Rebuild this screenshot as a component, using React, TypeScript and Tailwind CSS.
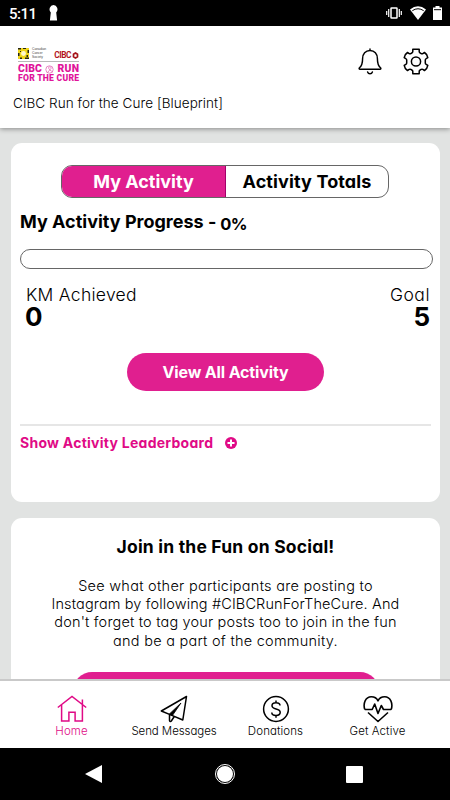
import React from "react";

function StatusBar() {
  return (
    <div className="flex h-[26px] shrink-0 items-center bg-black pl-[9px] pr-2 text-white">
      <span className="w-[25px] whitespace-nowrap pt-[2px] font-['Roboto'] text-[15px] font-medium leading-[24px] tracking-[-0.5px]">5:11</span>
      <svg className="ml-[15px]" width="9" height="16" viewBox="0 0 10 16" preserveAspectRatio="none" fill="currentColor">
        <path d="M5 0a4.4 4.4 0 0 0-3 7.6L1 15.5h8L8 7.6A4.4 4.4 0 0 0 5 0z" />
      </svg>
      <svg className="ml-auto" width="16" height="12" viewBox="0 0 16 12" fill="none" stroke="currentColor">
        <rect x="5" y="1" width="6" height="10" rx=".5" strokeWidth="1.5" />
        <path d="M2.7 2v8M13.3 2v8M.7 4v4M15.3 4v4" strokeWidth="1.2" />
      </svg>
      <svg className="ml-2" width="16" height="14" viewBox="0 0 16 14" fill="none">
        <path d="M0 3.5Q8-3 16 3.5L8 14z" fill="currentColor" />
        <path d="M2.3 4.7Q8 .8 13.7 4.7" stroke="#000" strokeWidth="1" />
      </svg>
      <svg className="ml-[7px]" width="9" height="14" viewBox="0 0 9 14" fill="currentColor">
        <path d="M2.5 0h4v1.5H9V14H0V1.5h2.5z" />
        <path d="M1 3.7h7" stroke="#000" />
      </svg>
    </div>
  );
}

function Logo() {
  return (
    <div className="flex w-[61px] flex-col font-['Roboto']">
      <div className="flex h-[12px] items-start">
        <svg width="11" height="11" viewBox="0 0 11 11">
          <path fill="#efd51b" d="M0 0h11v11H0z" />
          <path d="M0 0h3v1.5H0zM5 0h3v1H5zM9.5 2H11v3H9.5zM0 5h1.5v3H0zM2 9.5h2V11H2zM7 9.5h4V11H7zM8.5 7H10v2H8.5zM2 3h1v1H2z" fill="#252414" />
          <circle cx="5.5" cy="5.5" r="2.4" fill="#fff9cf" />
        </svg>
        <div className="ml-[3px] flex flex-col font-['Liberation_Sans'] text-[3.3px] leading-[3.8px] text-[#444]">
          <span>Canadian</span>
          <span>Cancer</span>
          <span>Society</span>
        </div>
        <span className="ml-auto mt-[2px] text-[8.3px] font-bold leading-[10px] tracking-[-0.45px] text-[#b3131b]">CIBC</span>
        <svg className="ml-[1px] mt-[3.5px]" width="7" height="7" viewBox="0 0 6 7" fill="none" stroke="#a51219" strokeWidth="1.7">
          <path d="M3 1l2 1.2v2.6L3 6 1 4.8V2.2z" />
        </svg>
      </div>
      <div className="mt-px h-px bg-[#b8b8b8]" />
      <div className="mt-[2px] flex h-[10px] items-center justify-between text-[10.4px] font-black leading-[10px] text-[#e0149a]">
        <span className="tracking-[0.1px]">CIBC</span>
        <svg width="9" height="9" viewBox="0 0 9 9" fill="none" stroke="#e77bbd" strokeWidth=".9">
          <circle cx="4.5" cy="4.5" r="3.7" />
          <path d="M2 8l4-4.5C7 2 4 1 3.6 2.5S6 6 8 7" />
        </svg>
        <span className="-mr-[0.3px] tracking-[0.3px]">RUN</span>
      </div>
      <div className="whitespace-nowrap text-[8.6px] font-black leading-[9px] tracking-[0.25px] text-[#e0149a]">FOR THE CURE</div>
    </div>
  );
}

function Header() {
  return (
    <header className="z-10 flex h-[102px] shrink-0 flex-col bg-white shadow-[0_1px_5px_rgba(0,0,0,0.4)]">
      <div className="flex h-[67px] items-start pl-[18px] pr-[21px] pt-[22px]">
        <Logo />
        <svg className="ml-auto" width="24" height="28" viewBox="0 0 24 28" fill="none" stroke="#000" strokeWidth="1.45" strokeLinecap="round" strokeLinejoin="round">
          <path d="M12 1v1.4M12 2.4c-4.5 0-7.4 3.4-7.4 8 0 6-1 7.6-3.1 9.3-.7.7-.4 1.5.5 1.5h20c.9 0 1.2-.8.5-1.5-2.1-1.7-3.1-3.3-3.1-9.3 0-4.6-2.9-8-7.4-8zM9.6 24c.7 2.4 4.1 2.4 4.8 0" />
        </svg>
        <svg className="ml-[21px]" width="26" height="27" viewBox="0 0 26 27" fill="none" stroke="#000" strokeWidth="1.5" strokeLinejoin="round">
          <path d="M9.8 1.2h6.4v2.4c0 .7.4 1.1 1 1.4l1 .6c.6.3 1 .3 1.6 0l1.7-1.1c2 1.300 3 3 3.300 5.100l-1.600 1c-.7.4-.9.8-.9 1.400v3c0 .6.200 1 .9 1.400l1.600 1c-.3 2.100-1.300 3.800-3.300 5.100l-1.700-1.100c-.6-.3-1-.3-1.600 0l-1 .6c-.6.3-1 .7-1 1.400v2.400H9.800v-2.400c0-.7-.4-1.100-1-1.400l-1-.6c-.6-.3-1-.3-1.600 0l-1.700 1.100c-2-1.300-3-3-3.300-5.100l1.600-1c.7-.4.9-.8.9-1.400v-3c0-.6-.2-1-.9-1.400l-1.600-1c.3-2.100 1.300-3.800 3.300-5.100l1.700 1.100c.6.3 1 .3 1.600 0l1-.6c.6-.3 1-.7 1-1.400z" />
          <circle cx="13" cy="13.5" r="4.6" />
        </svg>
      </div>
      <div className="pl-[13px] text-[13.5px] font-light leading-[20px] tracking-[0.06px]">CIBC Run for the Cure [Blueprint]</div>
    </header>
  );
}

function ActivityCard() {
  return (
    <section className="flex h-[359px] w-[429px] shrink-0 flex-col rounded-[11px] bg-white pl-[9px] pt-[22px]">
      <div className="ml-[41px] flex h-[33px] w-[328px] overflow-hidden rounded-[11px] border border-[#666] text-[18px] font-bold leading-[31px]">
        <div className="w-[164px] border-r border-[#a3006b] bg-[#e01f8f] text-center text-white">My Activity</div>
        <div className="flex-1 text-center tracking-[0.12px]">Activity Totals</div>
      </div>
      <div className="mt-[10px] flex h-[28px] items-start text-[18px] font-bold leading-[27px]">
        <span>My Activity Progress -</span>
        <span className="ml-1 mt-[3px] text-[16.5px] tracking-[-0.7px]">0%</span>
      </div>
      <div className="mt-[13px] h-[20px] w-[413px] rounded-full border border-[#666]" />
      <div className="ml-[6px] mt-[15px] flex w-[404px] justify-between">
        <div>
          <div className="text-[17.5px] font-light leading-[22px] tracking-[0.28px]">KM Achieved</div>
          <div className="-ml-px text-[26px] font-bold leading-[22px]">0</div>
        </div>
        <div className="text-right">
          <div className="text-[17.5px] font-light leading-[22px] tracking-[0.5px]">Goal</div>
          <div className="text-[26px] font-bold leading-[22px]">5</div>
        </div>
      </div>
      <button className="ml-[107px] mt-[25px] h-[38px] w-[197px] rounded-full bg-[#e01f8f] text-[16px] font-bold tracking-[-0.14px] text-white">View All Activity</button>
      <div className="mt-[33px] h-[2px] w-[411px] bg-[#e6e6e6]" />
      <div className="mt-[7px] flex h-[20px] items-center text-[14px] font-bold leading-[20px] text-[#e00a86]">
        <span className="w-[194px] whitespace-nowrap tracking-[0.26px]">Show Activity Leaderboard</span>
        <svg className="ml-[11px]" width="12" height="12" viewBox="0 0 12 12">
          <circle cx="6" cy="6" r="6" fill="currentColor" />
          <path d="M6 2.5v7M2.5 6h7" stroke="#fff" strokeWidth="2" />
        </svg>
      </div>
    </section>
  );
}

function SocialCard() {
  return (
    <section className="mt-4 flex h-[200px] w-[429px] shrink-0 flex-col items-center rounded-[11px] bg-white pt-[18px]">
      <h2 className="text-[17.5px] font-bold leading-[22px] tracking-[0.2px]">Join in the Fun on Social!</h2>
      <div className="mt-[19px] flex flex-col items-center whitespace-nowrap text-[14.5px] font-light leading-[18.2px]">
        <span className="tracking-[0.27px]">See what other participants are posting to</span>
        <span className="tracking-[0.13px]">Instagram by following #CIBCRunForTheCure. And</span>
        <span className="tracking-[0.17px]">don't forget to tag your posts too to join in the fun</span>
        <span className="tracking-[0.25px]">and be a part of the community.</span>
      </div>
      <div className="mt-[22px] h-[38px] w-[306px] shrink-0 rounded-full bg-[#e01f8f]" />
    </section>
  );
}

function BottomNav() {
  return (
    <nav className="z-10 flex h-[69px] shrink-0 justify-center border-t-2 border-[#c9c9c9] bg-white pt-[14px] text-[11.5px] font-light leading-[17px]">
      <div className="flex w-[101px] flex-col items-center text-[#e00a86]">
        <svg width="30" height="28" viewBox="0 0 30 28" fill="none" stroke="currentColor" strokeWidth="1.5">
          <path d="M.8 12.5L15 1.5l14.2 11M4.6 10v16h7.3v-8.8h6.2V26h7.3V9.7M25.4 10V4.5" />
        </svg>
        <span className="tracking-[0.1px]">Home</span>
      </div>
      <div className="flex w-[103px] flex-col items-center pl-[1px]">
        <svg width="28" height="28" viewBox="0 0 28 28" fill="none" stroke="#000" strokeWidth="1.5" strokeLinejoin="round">
          <path d="M26.5 1.5L1.3 16l8.2 3.4L22.8 25z" />
          <path d="M9.5 19.4v6.1c0 1 1.2 1.3 1.8.5l3-4.5" />
          <path d="M9.2 19.2L21 8l-8.6 12.5z" fill="#000" strokeWidth=".8" />
        </svg>
        <span className="tracking-[-0.08px]">Send Messages</span>
      </div>
      <div className="flex w-[101px] flex-col items-center">
        <svg width="28" height="28" viewBox="0 0 28 28" fill="none" stroke="#000" strokeWidth="1.5">
          <circle cx="14" cy="14" r="12.4" />
          <path d="M18 10.5c0-2-1.8-2.8-4-2.8s-4 1-4 3c0 4.3 8.2 2.2 8.2 6.5 0 2.2-1.9 3.2-4.2 3.2s-4.2-1-4.2-3M14 5.5v2.2M14 20.4v2.4" />
        </svg>
        <span className="tracking-[0.1px]">Donations</span>
      </div>
      <div className="flex w-[103px] flex-col items-center">
        <svg width="30" height="28" viewBox="0 0 30 28" fill="none" stroke="#000" strokeWidth="1.6" strokeLinejoin="round">
          <path d="M1.8 14.5C-.2 8.5 2.5 1.8 8.3 1.8c3 0 5.4 1.2 6.7 4 1.3-2.8 3.7-4 6.7-4 5.8 0 8.5 6.7 6.5 12.7M1.8 14.5h7.4l2.5-5.5 3.3 9.5 3.3-8 2.2 4h7.7M5 17.5l10 9 10-9" />
        </svg>
        <span className="tracking-[0.1px]">Get Active</span>
      </div>
    </nav>
  );
}

function SystemNav() {
  return (
    <div className="z-10 flex h-[52px] shrink-0 items-center bg-black text-white">
      <svg className="ml-[85px]" width="17" height="18" viewBox="0 0 17 18" fill="currentColor"><path d="M0 9L17 0v18z" /></svg>
      <svg className="ml-[113px]" width="20" height="20" viewBox="0 0 20 20" fill="currentColor">
        <circle cx="10" cy="10" r="9.5" fill="none" stroke="currentColor" />
        <circle cx="10" cy="10" r="8" />
      </svg>
      <div className="ml-[111px] h-[17px] w-[17px] rounded-[1px] bg-white" />
    </div>
  );
}

export default function App() {
  return (
    <div className="flex h-[800px] w-[450px] flex-col overflow-hidden bg-[#e1e3e2] font-['Inter','Noto_Sans',sans-serif] text-black [font-feature-settings:'cv11']">
      <StatusBar />
      <Header />
      <main className="flex min-h-0 flex-1 flex-col overflow-hidden pl-[11px] pt-[15px]">
        <ActivityCard />
        <SocialCard />
      </main>
      <BottomNav />
      <SystemNav />
    </div>
  );
}
